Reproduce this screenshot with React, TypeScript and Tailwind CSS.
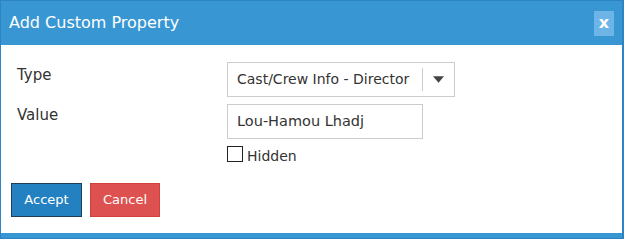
import React from "react";

export default function App() {
  return (
    <div className="w-[624px] h-[239px] bg-[#2d83c4] pt-px pl-px pr-[2px] pb-px" style={{ fontFamily: "'DejaVu Sans', sans-serif" }}>
      <div className="flex h-full flex-col bg-white">
        <div className="flex h-[44px] items-center justify-between bg-[#3897d3] pl-[8px] pr-[8px]">
          <span className="text-[16px] text-white">Add Custom Property</span>
          <button className="flex h-[25px] w-[20px] items-center justify-center bg-[#6cb5e6] text-[16px] font-bold leading-none text-white">x</button>
        </div>
        <div className="flex flex-1 flex-col">
          <div className="flex flex-col pl-[16px] pt-[17px]">
            <div className="flex items-start">
              <span className="w-[210px] pt-[3px] text-[15px] leading-[20px] text-[#333]">Type</span>
              <div className="flex h-[35px] w-[228px] items-center border border-[#ccc]">
                <span className="flex-1 pl-[9px] text-[14px] text-[#333]">Cast/Crew Info - Director</span>
                <div className="flex h-full w-[32px] items-center justify-center">
                  <div className="h-[23px] w-px self-center bg-[#ccc]" />
                  <svg className="ml-[10px] mr-[10px]" width="12" height="7" viewBox="0 0 12 7"><path d="M0 0h12L6 7z" fill="#444" /></svg>
                </div>
              </div>
            </div>
            <div className="mt-[7px] flex items-start">
              <span className="w-[210px] pt-[1px] text-[15px] leading-[20px] text-[#333]">Value</span>
              <div className="flex h-[35px] w-[196px] items-center border border-[#ccc] pl-[9px] text-[14.5px] text-[#333]">Lou-Hamou Lhadj</div>
            </div>
            <div className="mt-[6px] flex items-start pl-[210px]">
              <div className="mt-px h-[16px] w-[16px] border border-[#222] bg-white" />
              <span className="ml-[4px] pt-[1px] text-[14px] leading-[20px] text-[#333]">Hidden</span>
            </div>
          </div>
          <div className="flex gap-[8px] pl-[10px] pt-[17px]">
            <button className="h-[34px] w-[71px] border border-[#1c3e5a] bg-[#2381c1] text-[13px] text-white">Accept</button>
            <button className="h-[34px] w-[70px] border border-[#d43f3a] bg-[#dd5250] text-[13px] text-white">Cancel</button>
          </div>
        </div>
        <div className="h-[5px] bg-[#3897d3]" />
      </div>
    </div>
  );
}
